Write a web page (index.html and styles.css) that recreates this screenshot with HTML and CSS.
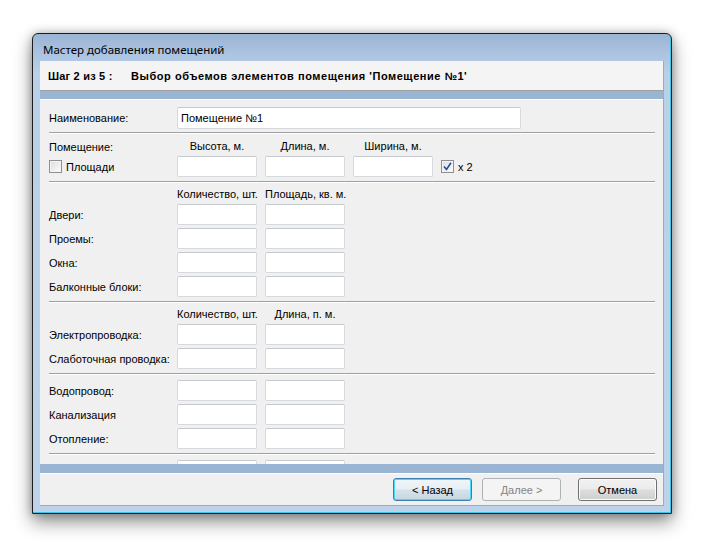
FILE: index.html
```html
<!DOCTYPE html>
<html>
<head>
<meta charset="utf-8">
<link rel="stylesheet" href="styles.css">
</head>
<body>
<div class="desktop">
  <div class="window">
    <div class="titlebar">Мастер добавления помещений</div>
    <div class="client">
      <div class="header"><span class="step">Шаг 2 из 5 :</span><span class="step-title">Выбор объемов элементов помещения 'Помещение №1'</span></div>
      <div class="band"></div>
      <div class="content">
        <div class="section sec-name">
          <div class="lbl">Наименование:</div>
          <div class="input wide">Помещение №1</div>
        </div>
        <div class="sep"></div>
        <div class="section grid sec-room">
          <div class="lbl">Помещение:</div>
          <div class="colhead">Высота, м.</div>
          <div class="colhead">Длина, м.</div>
          <div class="colhead">Ширина, м.</div>
          <div></div>
          <div class="lbl chk"><span class="cb"></span>Площади</div>
          <div class="input"></div>
          <div class="input"></div>
          <div class="input"></div>
          <div class="lbl chk"><span class="cb checked"><svg width="9" height="9" viewBox="0 0 9 9"><path d="M1 4.5 L3.5 7.5 L8 0.8" fill="none" stroke="#2b4c8c" stroke-width="1.6"/></svg></span>x 2</div>
        </div>
        <div class="sep"></div>
        <div class="section grid">
          <div></div>
          <div class="colhead">Количество, шт.</div>
          <div class="colhead">Площадь, кв. м.</div>
          <div></div><div></div>
          <div class="lbl">Двери:</div><div class="input"></div><div class="input"></div><div></div><div></div>
          <div class="lbl">Проемы:</div><div class="input"></div><div class="input"></div><div></div><div></div>
          <div class="lbl">Окна:</div><div class="input"></div><div class="input"></div><div></div><div></div>
          <div class="lbl">Балконные блоки:</div><div class="input"></div><div class="input"></div><div></div><div></div>
        </div>
        <div class="sep"></div>
        <div class="section grid">
          <div></div>
          <div class="colhead">Количество, шт.</div>
          <div class="colhead">Длина, п. м.</div>
          <div></div><div></div>
          <div class="lbl">Электропроводка:</div><div class="input"></div><div class="input"></div><div></div><div></div>
          <div class="lbl">Слаботочная проводка:</div><div class="input"></div><div class="input"></div><div></div><div></div>
        </div>
        <div class="sep"></div>
        <div class="section grid nohead">
          <div class="lbl">Водопровод:</div><div class="input"></div><div class="input"></div><div></div><div></div>
          <div class="lbl">Канализация</div><div class="input"></div><div class="input"></div><div></div><div></div>
          <div class="lbl">Отопление:</div><div class="input"></div><div class="input"></div><div></div><div></div>
        </div>
        <div class="sep"></div>
        <div class="section grid nohead">
          <div class="lbl"></div><div class="input"></div><div class="input"></div><div></div><div></div>
        </div>
      </div>
      <div class="band band-bottom"></div>
      <div class="footer">
        <button class="btn default">&lt; Назад</button>
        <button class="btn disabled">Далее &gt;</button>
        <button class="btn cancel">Отмена</button>
      </div>
    </div>
  </div>
</div>
</body>
</html>
```

FILE: styles.css
```css
* { box-sizing: border-box; }
html, body { margin: 0; padding: 0; background: #ffffff; }
body {
  width: 704px;
  height: 546px;
  overflow: hidden;
  font-family: "Liberation Sans", Arial, sans-serif;
  font-size: 11px;
  color: #000;
}
.desktop {
  padding: 33px 0 0 32px;
}
.window {
  width: 640px;
  height: 481px;
  border: 1px solid #1c1c1c;
  border-radius: 6px 6px 0 0;
  padding: 0 7px 7px 7px;
  background: linear-gradient(to bottom, #9ab4d4 0px, #acc4e0 20px, #b9d0e9 40px, #bcd3eb 100%);
  box-shadow: inset -1px -1px 0 #3fc6e6, 0 8px 18px rgba(0,0,0,0.45), 0 0 8px rgba(0,0,0,0.25);
  display: flex;
  flex-direction: column;
}
.titlebar {
  height: 27px;
  padding: 9px 0 0 3px;
  font-family: "Noto Sans", "Liberation Sans", sans-serif;
  font-size: 11.5px;
  line-height: 14px;
  color: #000;
}
.client {
  width: 624px;
  height: 445px;
  border-right: 1px solid #a8a8a8;
  border-bottom: 1px solid #a8a8a8;
  background: #f0f0f0;
  display: flex;
  flex-direction: column;
}
.header {
  height: 30px;
  background: #f4f4f4;
  border-bottom: 1px solid #a0a0a0;
  padding: 0 0 0 8px;
  display: flex;
  align-items: center;
  font-weight: bold;
  font-size: 11px;
}
.step { width: 83px; letter-spacing: 0.2px; }
.step-title { letter-spacing: 0.55px; }
.band {
  height: 8px;
  background: #9ab5d3;
}
.band-bottom { height: 9px; }
.content {
  height: 365px;
  border-top: 1px solid #ffffff;
  padding: 0 8px 0 9px;
  overflow: hidden;
  background: #f0f0f0;
}
.sep {
  height: 2px;
  border-top: 1px solid #a0a0a0;
  border-bottom: 1px solid #ffffff;
}
.section {
  padding: 5px 0 4px 0;
}
.sec-name {
  padding: 7px 0 3px 0;
  display: flex;
  align-items: center;
}
.sec-name .lbl { width: 128px; }
.grid {
  display: grid;
  grid-template-columns: 120px 80px 80px 80px auto;
  column-gap: 8px;
  grid-template-rows: 13px;
  grid-auto-rows: 21px;
  row-gap: 3px;
}
.grid.nohead {
  grid-template-rows: none;
}
.sec-room { padding-top: 6px; }
.lbl {
  display: flex;
  align-items: center;
  white-space: nowrap;
}
.colhead {
  text-align: center;
  line-height: 13px;
  white-space: nowrap;
}
.input {
  height: 21px;
  background: #ffffff;
  border: 1px solid #d6d9dd;
  border-top-color: #c6cacf;
  border-radius: 2px;
  padding: 0 3px;
  line-height: 19px;
}
.input.wide {
  width: 344px;
  height: 22px;
  line-height: 20px;
}
.chk { gap: 4px; }
.sec-room .chk:first-of-type { margin-left: 1px; }
.cb {
  width: 13px;
  height: 13px;
  border: 1px solid #8e8f8f;
  background: linear-gradient(135deg, #dcdcdc 0%, #f0f0f0 60%, #fbfbfb 100%);
  box-shadow: inset 0 0 0 1px #f4f4f4;
  display: inline-flex;
  align-items: center;
  justify-content: center;
  flex: none;
}
.cb.checked {
  background: linear-gradient(135deg, #d8dde6 0%, #eef1f5 60%, #fafbfc 100%);
}
.footer {
  height: 32px;
  border-top: 1px solid #ffffff;
  padding: 4px 6px 0 0;
  display: flex;
  justify-content: flex-end;
}
.btn {
  width: 79px;
  height: 23px;
  font-family: "Liberation Sans", Arial, sans-serif;
  font-size: 11px;
  font-weight: normal;
  color: #000;
  border: 1px solid #707070;
  border-radius: 3px;
  background: linear-gradient(to bottom, #f2f2f2 0%, #ebebeb 48%, #dddddd 52%, #cfcfcf 100%);
  box-shadow: inset 0 0 0 1px #fbfbfb;
  padding: 0;
}
.btn.default {
  border-color: #3c7fb1;
  background: linear-gradient(to bottom, #f0f6fa 0%, #e6eff5 48%, #d6e2eb 52%, #c8d6e0 100%);
  box-shadow: inset 0 0 0 1px #48d8fb;
}
.btn.disabled {
  margin-left: 10px;
  border-color: #adb2b5;
  background: #f4f4f4;
  box-shadow: none;
  color: #838383;
}
.btn.cancel { margin-left: 17px; }
```
